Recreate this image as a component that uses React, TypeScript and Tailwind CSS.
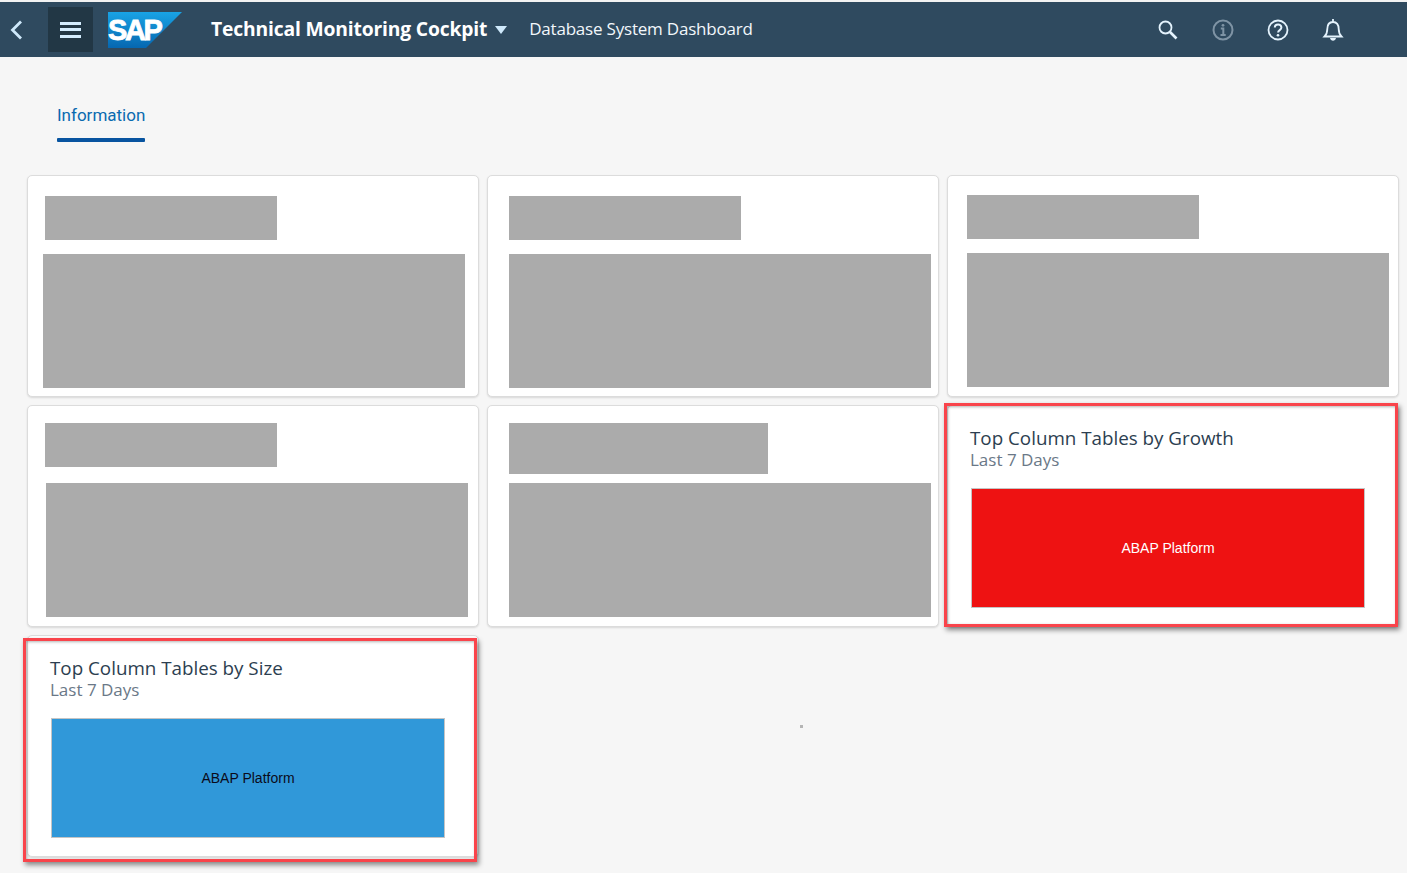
import React from "react";

const Ph = ({ className }: { className: string }) => <div className={`bg-[#ababab] ${className}`} />;

const cardCls =
  "relative bg-white rounded-[5px] border border-[#dcdcdc] shadow-[0_1px_2px_rgba(0,0,0,0.12)] h-[222px]";

const Frame = ({ className }: { className: string }) => (
  <div
    className={`absolute border-[3px] border-[#f9444b] shadow-[2px_3px_5px_rgba(0,0,0,0.45),inset_1px_1px_3px_rgba(0,0,0,0.3)] pointer-events-none ${className}`}
  />
);

const Tile = ({ title, fill, text, frame }: { title: string; fill: string; text: string; frame: string }) => (
  <div className={`${cardCls} pl-[22px] pt-[21px]`}>
    <div className="text-[18.800px] leading-[22px] text-[#2c3e50] whitespace-nowrap font-['Open_Sans','Noto_Sans',sans-serif]">
      {title}
    </div>
    <div className="text-[17px] leading-[22px] text-[#6a7887] whitespace-nowrap font-['Open_Sans','Noto_Sans',sans-serif]">
      Last 7 Days
    </div>
    <div
      className={`mt-[17px] ml-px w-[394px] h-[120px] border border-[#c4c4c4] flex items-center justify-center text-[14px] font-['Liberation_Sans',sans-serif] ${fill} ${text}`}
    >
      ABAP Platform
    </div>
    <Frame className={frame} />
  </div>
);

export default function App() {
  return (
    <div className="relative w-[1407px] h-[873px] bg-[#f6f6f6] overflow-hidden font-['Roboto',sans-serif]">
      <div className="h-[2px] bg-[#f2f2f2]" />
      <header className="h-[55px] bg-[#2f4a5f] flex items-center text-white">
        <svg className="ml-[10px] w-[12px] h-[20px]" viewBox="0 0 12 20" fill="none" stroke="#cfe9fb" strokeWidth="2.800">
          <path d="M11 1.500 2.500 10l8.500 8.500" />
        </svg>
        <div className="ml-[26px] w-[45px] h-[45px] bg-[#223745] flex flex-col items-center justify-center gap-[3.500px]">
          <span className="block w-[21px] h-[3px] bg-[#d3ecfd]" />
          <span className="block w-[21px] h-[3px] bg-[#d3ecfd]" />
          <span className="block w-[21px] h-[3px] bg-[#d3ecfd]" />
        </div>
        <svg className="ml-[15px] w-[74px] h-[36px]" viewBox="0 0 74 36">
          <defs>
            <linearGradient id="sap" x1="0" y1="0" x2="0" y2="1">
              <stop offset="0" stopColor="#19a3e5" />
              <stop offset="1" stopColor="#0667b0" />
            </linearGradient>
          </defs>
          <polygon points="0,0 74,0 38,36 0,36" fill="url(#sap)" />
          <text
            x="0"
            y="28"
            fontFamily="Liberation Sans"
            fontWeight="700"
            fontSize="29"
            letterSpacing="-2.400"
            fill="#fff"
            stroke="#fff"
            strokeWidth="0.800"
          >
            SAP
          </text>
        </svg>
        <div className="ml-[29px] text-[19.300px] font-bold whitespace-nowrap font-['Open_Sans',sans-serif] tracking-[-0.17px]">
          Technical Monitoring Cockpit
        </div>
        <svg className="ml-[8px] w-[12px] h-[8px]" viewBox="0 0 12 8">
          <polygon points="0,0 12,0 6,8" fill="#cfe9fb" />
        </svg>
        <div className="ml-[22px] pb-[2px] text-[17px] tracking-[-0.2px] whitespace-nowrap font-['Open_Sans',sans-serif] text-[#f2f7fb]">
          Database System Dashboard
        </div>
        <div className="ml-auto mr-[63px] flex items-center gap-[33px]">
          <svg className="w-[22px] h-[22px]" viewBox="0 0 22 22" fill="none" stroke="#e4f3fd" strokeWidth="1.800">
            <circle cx="8.500" cy="8.500" r="6" />
            <path d="m13 13 6.500 6.500" strokeWidth="2.600" />
          </svg>
          <svg className="w-[22px] h-[22px]" viewBox="0 0 22 22" fill="none" stroke="#7f94a5" strokeWidth="2">
            <circle cx="11" cy="11" r="9.500" />
            <path d="M8.800 9.500h2.500V16M8.500 16h5.200" strokeWidth="2" />
            <circle cx="11" cy="6.300" r="1.400" fill="#7f94a5" stroke="none" />
          </svg>
          <svg className="w-[22px] h-[22px]" viewBox="0 0 22 22" fill="none" stroke="#e4f3fd" strokeWidth="1.800">
            <circle cx="11" cy="11" r="9.500" />
            <path d="M7.800 8.600c0-4.200 6.600-4.200 6.600 0 0 2.600-3.300 2.400-3.300 4.900" strokeWidth="2" />
            <circle cx="11" cy="16.300" r="1.300" fill="#e4f3fd" stroke="none" />
          </svg>
          <svg className="w-[22px] h-[24px]" viewBox="0 0 22 24" fill="none" stroke="#e4f3fd" strokeWidth="1.800">
            <path d="M2.500 18.500h17c-2-2-2.800-3.800-2.800-7.500 0-4.200-2-7-5.700-7s-5.700 2.800-5.700 7c0 3.700-.8 5.500-2.800 7.500ZM11 1v3" />
            <path d="M8 20h6c-.4 1.800-1.600 2.800-3 2.800S8.400 21.800 8 20Z" fill="#e4f3fd" stroke="none" />
          </svg>
        </div>
      </header>

      <nav className="pl-[57px] pt-[47px]">
        <div className="w-[88px]">
          <div className="text-[17px] leading-[22px] text-[#0a6ab0] whitespace-nowrap font-['Roboto',sans-serif]">
            Information
          </div>
          <div className="mt-[12px] h-[4px] rounded-[1px] bg-[#0854a0]" />
        </div>
      </nav>

      <main className="ml-[27px] mt-[33px] w-[1372px] grid grid-cols-[452px_452px_452px] gap-[8px]">
        <div className={`${cardCls} pt-[20px]`}>
          <Ph className="ml-[17px] w-[232px] h-[44px]" />
          <Ph className="mt-[14px] ml-[15px] w-[422px] h-[134px]" />
        </div>
        <div className={`${cardCls} pt-[20px]`}>
          <Ph className="ml-[21px] w-[232px] h-[44px]" />
          <Ph className="mt-[14px] ml-[21px] w-[422px] h-[134px]" />
        </div>
        <div className={`${cardCls} pt-[19px]`}>
          <Ph className="ml-[19px] w-[232px] h-[44px]" />
          <Ph className="mt-[14px] ml-[19px] w-[422px] h-[134px]" />
        </div>
        <div className={`${cardCls} pt-[17px]`}>
          <Ph className="ml-[17px] w-[232px] h-[44px]" />
          <Ph className="mt-[16px] ml-[18px] w-[422px] h-[134px]" />
        </div>
        <div className={`${cardCls} pt-[17px]`}>
          <Ph className="ml-[21px] w-[259px] h-[51px]" />
          <Ph className="mt-[9px] ml-[21px] w-[422px] h-[134px]" />
        </div>
        <Tile
          title="Top Column Tables by Growth"
          fill="bg-[#ee1212]"
          text="text-white"
          frame="left-[-4px] right-0 top-[-3px] bottom-[-1px]"
        />
        <Tile
          title="Top Column Tables by Size"
          fill="bg-[#3098d9]"
          text="text-[#0b0b1a]"
          frame="left-[-5px] right-[1px] top-[2px] bottom-[-6px]"
        />
      </main>
      <div className="absolute left-[800px] top-[725px] w-[3px] h-[3px] bg-[#b5b5b5]" />
    </div>
  );
}
